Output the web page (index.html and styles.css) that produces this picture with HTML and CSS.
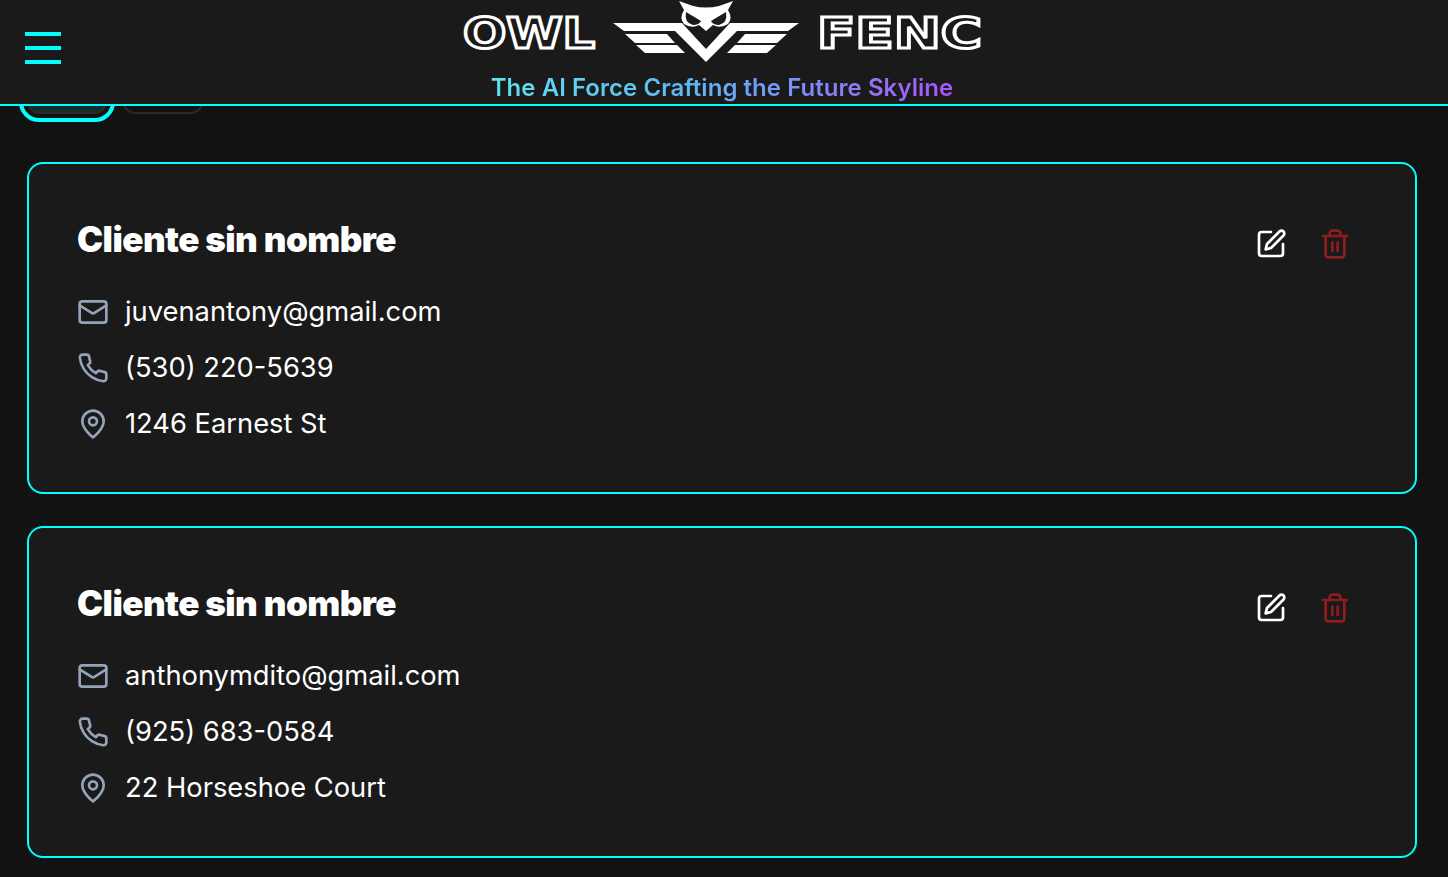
FILE: index.html
```html
<!DOCTYPE html>
<html lang="es">
<head>
  <meta charset="UTF-8">
  <meta name="viewport" content="width=device-width, initial-scale=1">
  <title>Owl Fenc - Clientes</title>
  <link rel="stylesheet" href="styles.css">
</head>
<body>
  <header class="topbar">
    <button class="menu-btn" aria-label="Menu"><span></span><span></span><span></span></button>
    <div class="brand">
      <svg class="logo" viewBox="462 0 520 66" width="520" height="66">
        <text class="logo-word" x="463" y="48" textLength="132" lengthAdjust="spacingAndGlyphs">OWL</text>
        <text class="logo-word" x="817" y="48" textLength="165" lengthAdjust="spacingAndGlyphs">FENC</text>
        <g class="logo-mark">
          <polygon points="613,23 682,23 706,49 730,23 799,23 788,31 737,31 706,62 675,31 624,31"/>
          <polygon points="625,34 667,34 675,43 635,43"/>
          <polygon points="636,45 677,45 685,53 645,53"/>
          <polygon points="787,34 745,34 737,43 777,43"/>
          <polygon points="776,45 735,45 727,53 767,53"/>
          <path d="M679 1 L693 6 Q706 9 719 6 L733 1 L728 10 Q733 18 728 24 Q720 29 713 25 L706 31 L699 25 Q692 29 684 24 Q679 18 684 10 Z"/>
        </g>
        <path class="logo-eye" d="M686 12 L701 21 Q699 25 693 25 Q684 23 686 12 Z"/>
        <path class="logo-eye" d="M726 12 L711 21 Q713 25 719 25 Q728 23 726 12 Z"/>
      </svg>
      <p class="tagline">The AI Force Crafting the Future Skyline</p>
    </div>
  </header>

  <main class="content">
    <div class="tabs">
      <div class="tab active"></div>
      <div class="tab"></div>
    </div>

    <section class="card">
      <div class="card-head">
        <h2>Cliente sin nombre</h2>
        <div class="actions">
          <button class="icon-btn">
            <svg class="icon" viewBox="0 0 24 24"><path d="M12 3H5a2 2 0 0 0-2 2v14a2 2 0 0 0 2 2h14a2 2 0 0 0 2-2v-7"/><path d="M18.375 2.625a2.121 2.121 0 1 1 3 3L12 15l-4 1 1-4Z"/></svg>
          </button>
          <button class="icon-btn danger">
            <svg class="icon" viewBox="0 0 24 24"><path d="M3 6h18"/><path d="M19 6v14c0 1-1 2-2 2H7c-1 0-2-1-2-2V6"/><path d="M8 6V4c0-1 1-2 2-2h4c1 0 2 1 2 2v2"/><path d="M10 11v6"/><path d="M14 11v6"/></svg>
          </button>
        </div>
      </div>
      <ul class="info">
        <li>
          <svg class="icon" viewBox="0 0 24 24"><rect x="2" y="4" width="20" height="16" rx="2"/><path d="m22 7-8.97 5.7a1.94 1.94 0 0 1-2.06 0L2 7"/></svg>
          <span>juvenantony@gmail.com</span>
        </li>
        <li>
          <svg class="icon" viewBox="0 0 24 24"><path d="M22 16.92v3a2 2 0 0 1-2.18 2 19.79 19.79 0 0 1-8.63-3.07 19.5 19.5 0 0 1-6-6 19.79 19.79 0 0 1-3.07-8.67A2 2 0 0 1 4.11 2h3a2 2 0 0 1 2 1.72 12.84 12.84 0 0 0 .7 2.81 2 2 0 0 1-.45 2.11L8.09 9.91a16 16 0 0 0 6 6l1.27-1.27a2 2 0 0 1 2.11-.45 12.84 12.84 0 0 0 2.81.7A2 2 0 0 1 22 16.92z"/></svg>
          <span>(530) 220-5639</span>
        </li>
        <li>
          <svg class="icon" viewBox="0 0 24 24"><path d="M20 10c0 6-8 12-8 12s-8-6-8-12a8 8 0 0 1 16 0Z"/><circle cx="12" cy="10" r="3"/></svg>
          <span>1246 Earnest St</span>
        </li>
      </ul>
    </section>

    <section class="card">
      <div class="card-head">
        <h2>Cliente sin nombre</h2>
        <div class="actions">
          <button class="icon-btn">
            <svg class="icon" viewBox="0 0 24 24"><path d="M12 3H5a2 2 0 0 0-2 2v14a2 2 0 0 0 2 2h14a2 2 0 0 0 2-2v-7"/><path d="M18.375 2.625a2.121 2.121 0 1 1 3 3L12 15l-4 1 1-4Z"/></svg>
          </button>
          <button class="icon-btn danger">
            <svg class="icon" viewBox="0 0 24 24"><path d="M3 6h18"/><path d="M19 6v14c0 1-1 2-2 2H7c-1 0-2-1-2-2V6"/><path d="M8 6V4c0-1 1-2 2-2h4c1 0 2 1 2 2v2"/><path d="M10 11v6"/><path d="M14 11v6"/></svg>
          </button>
        </div>
      </div>
      <ul class="info">
        <li>
          <svg class="icon" viewBox="0 0 24 24"><rect x="2" y="4" width="20" height="16" rx="2"/><path d="m22 7-8.97 5.7a1.94 1.94 0 0 1-2.06 0L2 7"/></svg>
          <span>anthonymdito@gmail.com</span>
        </li>
        <li>
          <svg class="icon" viewBox="0 0 24 24"><path d="M22 16.92v3a2 2 0 0 1-2.18 2 19.79 19.79 0 0 1-8.63-3.07 19.5 19.5 0 0 1-6-6 19.79 19.79 0 0 1-3.07-8.67A2 2 0 0 1 4.11 2h3a2 2 0 0 1 2 1.72 12.84 12.84 0 0 0 .7 2.81 2 2 0 0 1-.45 2.11L8.09 9.91a16 16 0 0 0 6 6l1.27-1.27a2 2 0 0 1 2.11-.45 12.84 12.84 0 0 0 2.81.7A2 2 0 0 1 22 16.92z"/></svg>
          <span>(925) 683-0584</span>
        </li>
        <li>
          <svg class="icon" viewBox="0 0 24 24"><path d="M20 10c0 6-8 12-8 12s-8-6-8-12a8 8 0 0 1 16 0Z"/><circle cx="12" cy="10" r="3"/></svg>
          <span>22 Horseshoe Court</span>
        </li>
      </ul>
    </section>
  </main>
</body>
</html>
```

FILE: styles.css
```css
* {
  box-sizing: border-box;
}

body {
  margin: 0;
  height: 877px;
  overflow: hidden;
  background: #121212;
  color: white;
  font-family: Inter, "Noto Sans", sans-serif;
}

.topbar {
  position: fixed;
  top: 0;
  left: 0;
  right: 0;
  height: 106px;
  padding-right: 4px;
  background: #1a1a1a;
  border-bottom: 2px solid #00ffff;
  display: flex;
  justify-content: center;
  z-index: 10;
}

.menu-btn {
  position: absolute;
  top: 32px;
  left: 25px;
  width: 36px;
  padding: 0;
  background: none;
  border: none;
  display: flex;
  flex-direction: column;
  gap: 10px;
}

.menu-btn span {
  height: 4px;
  background: #00ffff;
}

.brand {
  display: flex;
  flex-direction: column;
  align-items: center;
}

.logo {
  display: block;
}

.logo-word {
  font-family: "DejaVu Sans", sans-serif;
  font-weight: bold;
  font-size: 43px;
  fill: #1a1a1a;
  stroke: white;
  stroke-width: 3;
}

.logo-mark {
  fill: white;
}

.logo-eye {
  fill: #1a1a1a;
}

.tagline {
  margin: 8px 0 0;
  font-size: 24px;
  line-height: 28px;
  font-weight: 600;
  letter-spacing: 0.05px;
  background: linear-gradient(to right, #5fe0ee, #60b5f5 45%, #a855f7);
  -webkit-background-clip: text;
  background-clip: text;
  color: transparent;
}

.content {
  padding: 70px 31px 0 27px;
}

.tabs {
  display: flex;
  gap: 16px;
  margin-bottom: 48px;
}

.tab {
  width: 80px;
  height: 44px;
  border: 2px solid #2a2a2a;
  border-radius: 12px;
}

.tab.active {
  background: #172a2b;
  outline: 4px solid #00ffff;
  outline-offset: 4px;
}

.card {
  background: #1a1a1a;
  border: 2px solid #00ffff;
  border-radius: 16px;
  padding: 48px 48px 52px;
  margin-bottom: 32px;
}

.card-head {
  display: flex;
  justify-content: space-between;
  height: 56px;
  margin-bottom: 28px;
  padding-right: 8px;
}

.card-head h2 {
  margin: 0;
  font-size: 35px;
  line-height: 55px;
  font-weight: 900;
  letter-spacing: -0.55px;
}

.actions {
  display: flex;
  gap: 16px;
  align-items: flex-end;
}

.icon-btn {
  padding: 8px;
  background: none;
  border: none;
  color: white;
  display: flex;
}

.icon-btn.danger {
  color: #8f1d1d;
}

.icon {
  width: 32px;
  height: 32px;
  flex-shrink: 0;
  fill: none;
  stroke: currentColor;
  stroke-width: 2;
  stroke-linecap: round;
  stroke-linejoin: round;
}

.info {
  list-style: none;
  margin: 0;
  padding: 0;
  display: flex;
  flex-direction: column;
  gap: 24px;
}

.info li {
  display: flex;
  align-items: center;
  gap: 16px;
  height: 32px;
  font-size: 27.3px;
  line-height: 30px;
}

.info .icon {
  color: #94a3b8;
}
```
